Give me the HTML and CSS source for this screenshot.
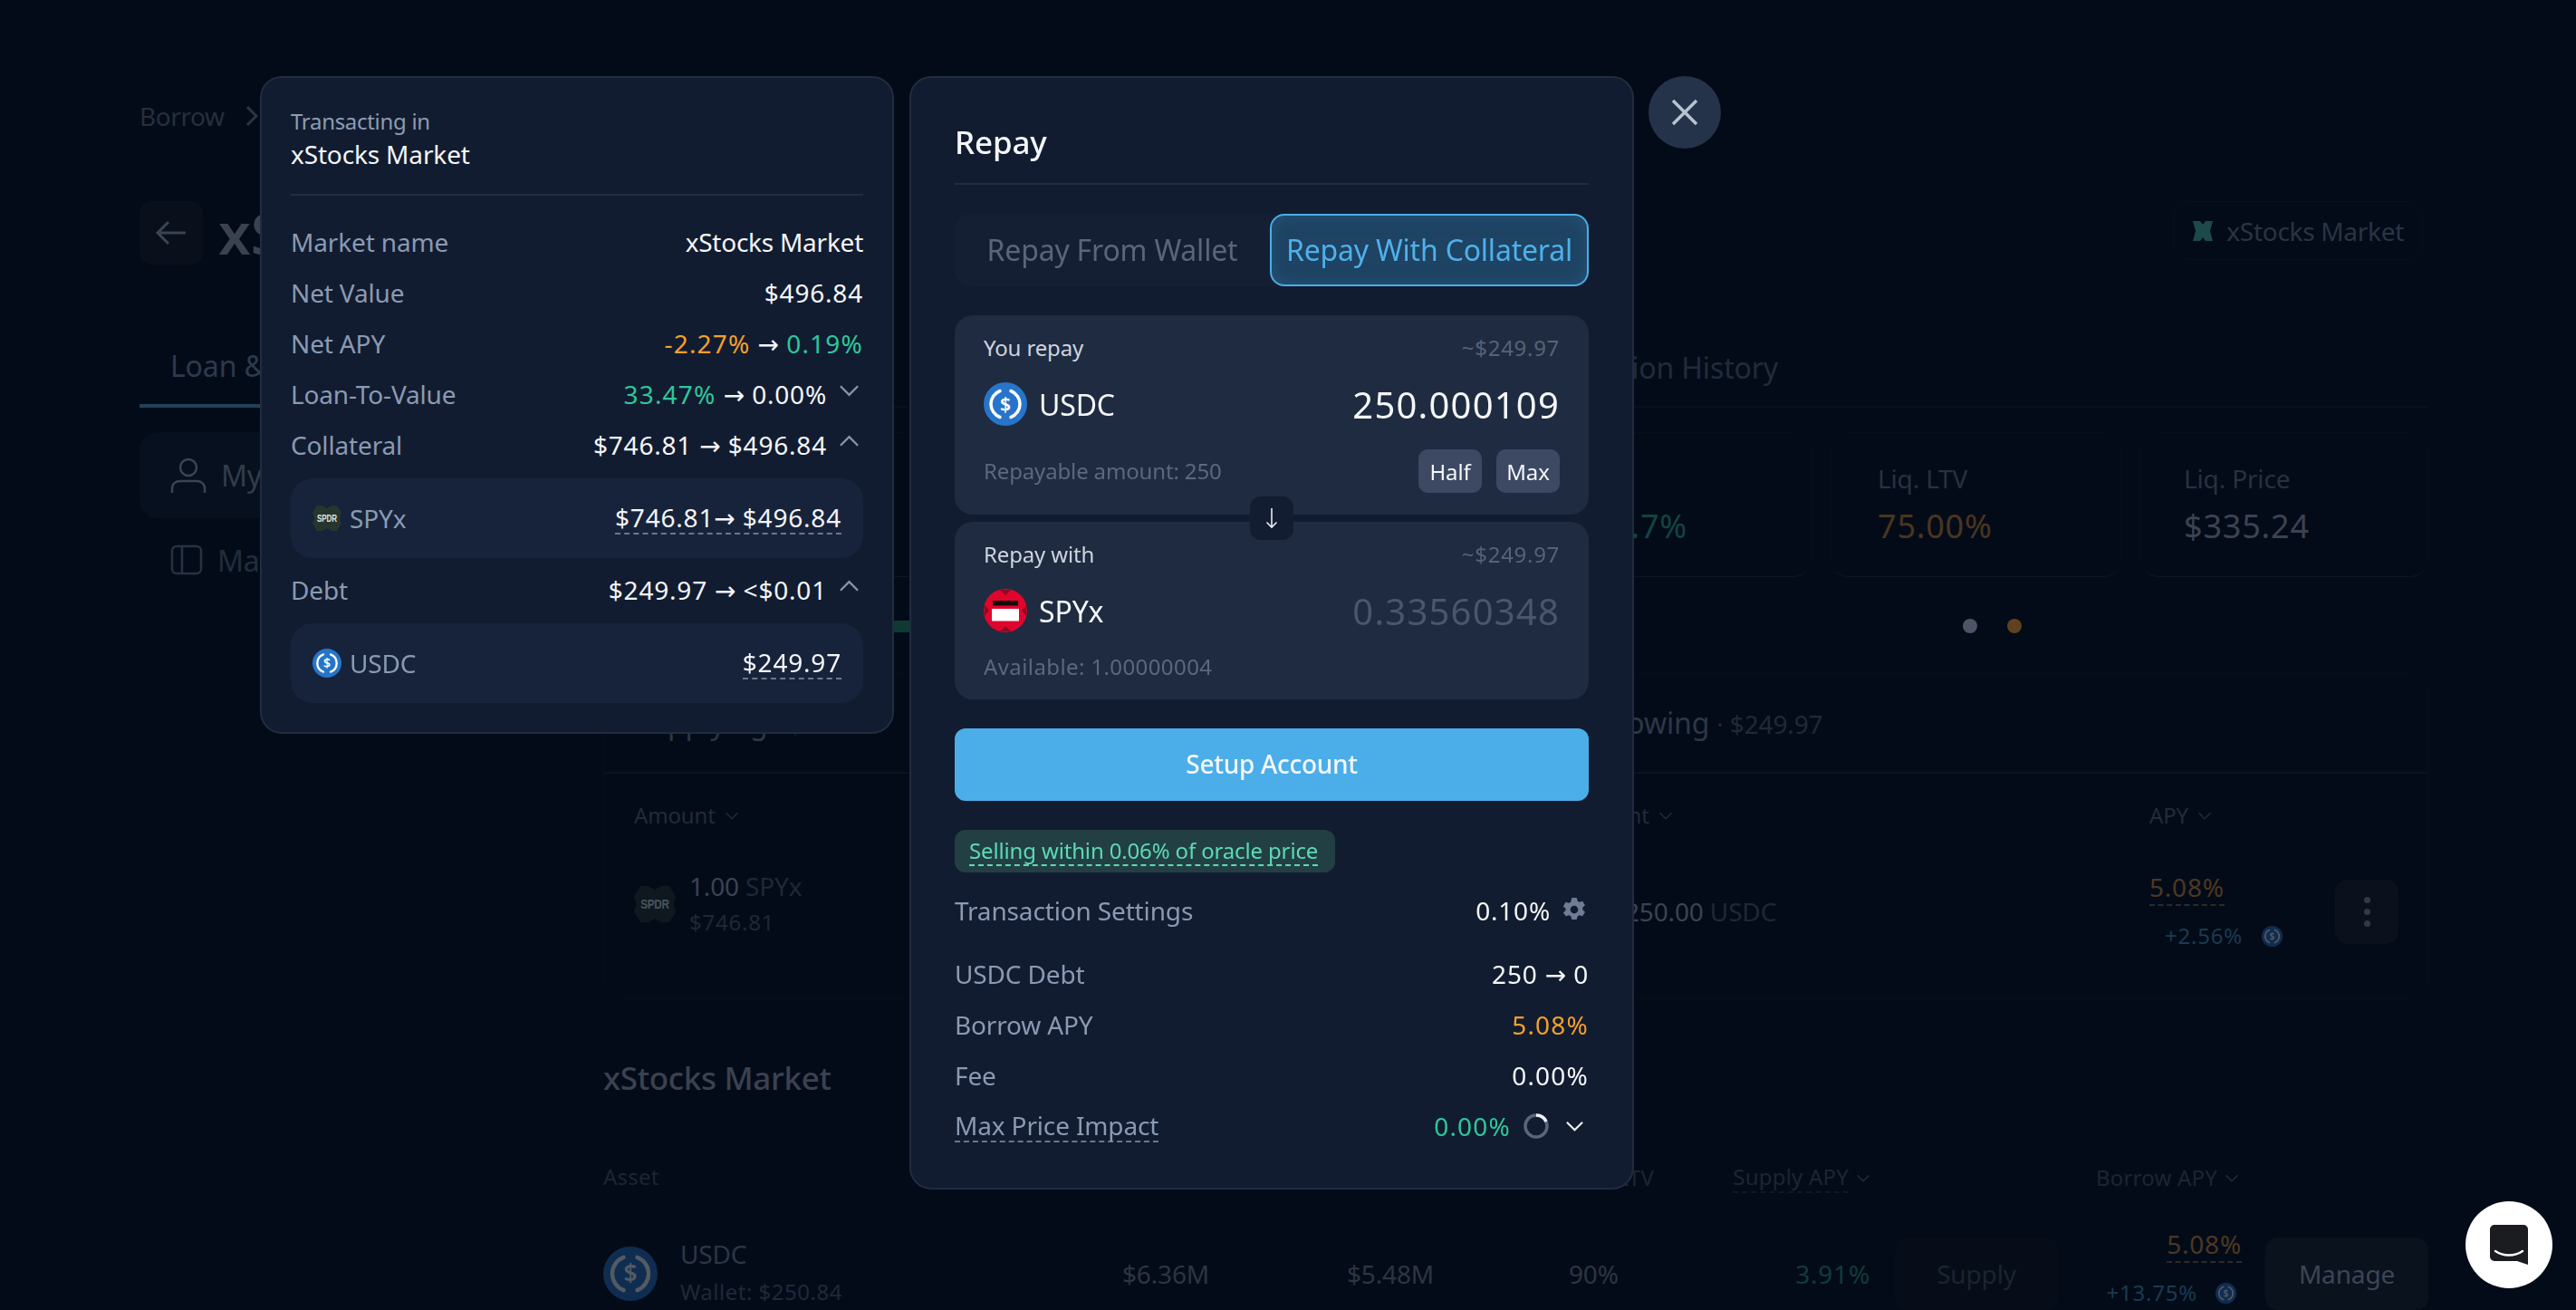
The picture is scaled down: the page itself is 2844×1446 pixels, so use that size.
FILE: index.html
```html
<!DOCTYPE html>
<html lang="en">
<head>
  <meta charset="UTF-8">
  <title>Repay</title>
  <link rel="stylesheet" href="styles.css">
</head>
<body>

  <svg class="defs" width="0" height="0">
    <symbol id="usdc" viewBox="0 0 48 48">
      <circle cx="24" cy="24" r="24" fill="#2775ca"/>
      <path d="M18 9.5A15.5 15.5 0 0 0 18 38.500M30 9.500A15.500 15.500 0 0 1 30 38.500" fill="none" stroke="#fff" stroke-width="3.500" stroke-linecap="round"/>
      <text x="24" y="31.500" text-anchor="middle" font-family="Noto Sans" font-size="21" font-weight="600" fill="#fff">$</text>
    </symbol>
    <symbol id="spyx" viewBox="0 0 48 48">
      <circle cx="24" cy="24" r="24" fill="#e0052d"/>
      <path d="M18 1l6 6 6-6zM18 47l6-6 6 6zM1 18l5 6-5 6zM47 18l-5 6 5 6z" fill="#8e0a20"/>
      <rect x="10" y="13" width="28" height="5.500" fill="#17080d"/>
      <rect x="9" y="22" width="30" height="13.500" fill="#fff"/>
    </symbol>
    <symbol id="spdr" viewBox="0 0 32 32">
      <path d="M5 2h6l5 3 5-3h6l5 8-2 6 2 6-5 8h-6l-5-3-5 3h-6l-5-8 2-6-2-6z" fill="#26352e"/>
      <text x="16" y="19.500" text-anchor="middle" font-family="Liberation Sans Narrow, Liberation Sans" font-size="10" font-weight="700" textLength="22" lengthAdjust="spacingAndGlyphs" fill="#dfe5e2">SPDR</text>
    </symbol>
    <symbol id="chev-down" viewBox="0 0 24 14">
      <path d="M2 2l10 10L22 2" fill="none" stroke="currentColor" stroke-width="2.400"/>
    </symbol>
    <symbol id="chev-up" viewBox="0 0 24 14">
      <path d="M2 12L12 2l10 10" fill="none" stroke="currentColor" stroke-width="2.400"/>
    </symbol>
  </svg>

  <!-- page behind the modal -->
  <div class="page">
    <div class="crumbs">Borrow
      <svg class="crumb-sep" width="14" height="22" viewBox="0 0 14 22"><path d="M2 1l10 10L2 21" fill="none" stroke="#2b3444" stroke-width="3"/></svg>
      xStocks Market
    </div>

    <div class="head">
      <div class="head-left">
        <div class="back">
          <svg width="36" height="30" viewBox="0 0 36 30"><path d="M34 15H3M15 3L3 15l12 12" fill="none" stroke="#3a4452" stroke-width="3"/></svg>
        </div>
        <div class="page-title">xStocks Market</div>
      </div>
      <div class="chip">
        <svg width="24" height="24" viewBox="0 0 24 24"><path d="M1 1h8l3 4 3-4h8l-3 11 3 11h-8l-3-4-3 4H1l3-11z" fill="#1c4a4b"/></svg>
        xStocks Market
      </div>
    </div>

    <div class="tabs">
      <div class="tab tab-active">Loan &amp; Borrow</div>
      <div class="tab">Transaction History</div>
    </div>

    <div class="content">
      <div class="side">
        <div class="side-item side-active">
          <svg width="40" height="40" viewBox="0 0 40 40"><circle cx="20" cy="11" r="9" fill="none" stroke="#3a4452" stroke-width="2.500"/><path d="M2 39v-5c0-5 4-8 9-8h18c5 0 9 3 9 8v5" fill="none" stroke="#3a4452" stroke-width="2.500"/></svg>
          My Positions
        </div>
        <div class="side-item">
          <svg width="36" height="34" viewBox="0 0 36 34"><rect x="2" y="2" width="32" height="30" rx="5" fill="none" stroke="#263243" stroke-width="2.500"/><path d="M13 2v30" stroke="#263243" stroke-width="2.500"/></svg>
          Markets
        </div>
      </div>

      <div class="main">
        <div class="stats">
          <div class="stat stat-wide"><div class="stat-label">Net APY</div><div class="stat-value dim-green stat-end">4.7%</div></div>
          <div class="stat stat-ltv"><div class="stat-label">Liq. LTV</div><div class="stat-value dim-orange">75.00%</div></div>
          <div class="stat stat-price"><div class="stat-label">Liq. Price</div><div class="stat-value dim-text">$335.24</div></div>
        </div>

        <div class="slider">
          <div class="slider-bar"></div>
          <div class="dots"><span class="dot"></span><span class="dot dot-orange"></span></div>
        </div>

        <div class="positions">
          <div class="pos-card">
            <div class="pos-head">Supplying <span class="pos-sum">· $746.81</span></div>
            <div class="pos-th">Amount <svg class="th-chev"><use href="#chev-down"/></svg></div>
            <div class="pos-row">
              <svg class="pos-icon dim-icon"><use href="#spdr"/></svg>
              <div>
                <div class="pos-amount">1.00 <span class="pos-unit">SPYx</span></div>
                <div class="pos-usd">$746.81</div>
              </div>
            </div>
          </div>

          <div class="pos-card">
            <div class="pos-head">Borrowing <span class="pos-sum">· $249.97</span></div>
            <div class="borrow-grid">
              <div class="pos-th">Amount <svg class="th-chev"><use href="#chev-down"/></svg></div>
              <div class="pos-th">APY <svg class="th-chev"><use href="#chev-down"/></svg></div>
            </div>
            <div class="borrow-grid borrow-row">
              <div class="borrow-amount">
                <svg class="pos-icon dim-icon"><use href="#usdc"/></svg>
                <div class="pos-amount">250.00 <span class="pos-unit">USDC</span></div>
              </div>
              <div class="apy-cell">
                <div class="apy-value"><span class="dim-dash">5.08%</span></div>
                <div class="apy-reward">+2.56% <svg class="reward-icon dim-icon"><use href="#usdc"/></svg></div>
              </div>
              <div class="more"><i></i><i></i><i></i></div>
            </div>
          </div>
        </div>

        <div class="market-title">xStocks Market</div>

        <div class="market-grid market-head">
          <div>Asset</div>
          <div></div>
          <div></div>
          <div class="th-ltv">Max LTV <svg class="th-chev"><use href="#chev-down"/></svg></div>
          <div class="th-right"><span class="th-dash">Supply APY</span> <svg class="th-chev"><use href="#chev-down"/></svg></div>
          <div></div>
          <div class="th-right th-borrow">Borrow APY <svg class="th-chev"><use href="#chev-down"/></svg></div>
          <div></div>
        </div>

        <div class="market-grid market-row">
          <div class="asset">
            <svg class="asset-icon dim-icon"><use href="#usdc"/></svg>
            <div>
              <div class="asset-name">USDC</div>
              <div class="asset-wallet">Wallet: $250.84</div>
            </div>
          </div>
          <div class="cell-num">$6.36M</div>
          <div class="cell-num">$5.48M</div>
          <div class="cell-num">90%</div>
          <div class="cell-supply">3.91%</div>
          <div class="cell-btn"><div class="ghost-btn">Supply</div></div>
          <div class="cell-borrow">
            <div><span class="dim-dash">5.08%</span></div>
            <div class="apy-reward-2">+13.75% <svg class="reward-icon dim-icon"><use href="#usdc"/></svg></div>
          </div>
          <div class="cell-btn"><div class="ghost-btn manage-btn">Manage</div></div>
        </div>
      </div>
    </div>
  </div>

  <!-- modal -->
  <div class="overlay">
    <div class="panel info-panel">
      <div class="info-head">
        <div class="info-small">Transacting in</div>
        <div class="info-market">xStocks Market</div>
      </div>

      <div class="row"><span class="label">Market name</span><span class="val val-text">xStocks Market</span></div>
      <div class="row"><span class="label">Net Value</span><span class="val">$496.84</span></div>
      <div class="row"><span class="label">Net APY</span><span class="val"><span class="orange">-2.27%</span> <span class="arrow">→</span> <span class="green">0.19%</span></span></div>
      <div class="row">
        <span class="label">Loan-To-Value</span>
        <span class="val-chev"><span class="val"><span class="green">33.47%</span> <span class="arrow">→</span> 0.00%</span><svg class="chev"><use href="#chev-down"/></svg></span>
      </div>
      <div class="row">
        <span class="label">Collateral</span>
        <span class="val-chev"><span class="val">$746.81 <span class="arrow">→</span> $496.84</span><svg class="chev"><use href="#chev-up"/></svg></span>
      </div>
      <div class="sub-card">
        <span class="sub-token"><svg class="sub-icon"><use href="#spdr"/></svg>SPYx</span>
        <span class="val dashed">$746.81<span class="arrow">→</span> $496.84</span>
      </div>
      <div class="row">
        <span class="label">Debt</span>
        <span class="val-chev"><span class="val">$249.97 <span class="arrow">→</span> &lt;$0.01</span><svg class="chev"><use href="#chev-up"/></svg></span>
      </div>
      <div class="sub-card">
        <span class="sub-token"><svg class="sub-icon"><use href="#usdc"/></svg>USDC</span>
        <span class="val dashed">$249.97</span>
      </div>
    </div>

    <div class="panel repay-panel">
      <div class="repay-title">Repay</div>

      <div class="switch">
        <div class="switch-item">Repay From Wallet</div>
        <div class="switch-item switch-active">Repay With Collateral</div>
      </div>

      <div class="swap-cards">
        <div class="swap-card card-top">
          <div class="swap-line"><span class="swap-label">You repay</span><span class="swap-usd">~$249.97</span></div>
          <div class="token-line">
            <span class="token"><svg class="token-icon"><use href="#usdc"/></svg>USDC</span>
            <span class="amount">250.000109</span>
          </div>
          <div class="swap-foot">
            <span class="swap-note">Repayable amount: 250</span>
            <span class="mini-btns"><span class="mini-btn">Half</span><span class="mini-btn">Max</span></span>
          </div>
        </div>
        <div class="swap-card card-bottom">
          <div class="swap-line"><span class="swap-label">Repay with</span><span class="swap-usd">~$249.97</span></div>
          <div class="token-line">
            <span class="token"><svg class="token-icon"><use href="#spyx"/></svg>SPYx</span>
            <span class="amount amount-dim">0.33560348</span>
          </div>
          <div class="swap-note note-last">Available: 1.00000004</div>
        </div>
        <div class="swap-arrow">
          <svg width="14" height="24" viewBox="0 0 14 24"><path d="M7 1v21M1.500 16.500L7 22l5.500-5.500" fill="none" stroke="#e8edf3" stroke-width="1.600"/></svg>
        </div>
      </div>

      <div class="setup-btn">Setup Account</div>

      <div class="oracle"><span class="oracle-text">Selling within 0.06% of oracle price</span></div>

      <div class="row"><span class="label">Transaction Settings</span>
        <span class="val-icon"><span class="val">0.10%</span>
          <svg class="gear" viewBox="0 0 24 24"><path fill-rule="evenodd" d="M9.500 0h5l.8 3.300 2 1.100 3.200-1 2.500 4.300-2.400 2.300v2.200l2.400 2.300-2.500 4.300-3.200-1-2 1.100-.8 3.300h-5l-.8-3.300-2-1.100-3.200 1L.8 15.300l2.400-2.300v-2.200L.8 8.700l2.500-4.300 3.200 1 2-1.100zM12 8a4 4 0 1 0 0 8 4 4 0 0 0 0-8z" fill="#6f7c93"/></svg>
        </span>
      </div>
      <div class="row row-first"><span class="label">USDC Debt</span><span class="val">250 <span class="arrow">→</span> 0</span></div>
      <div class="row"><span class="label">Borrow APY</span><span class="val orange">5.08%</span></div>
      <div class="row"><span class="label">Fee</span><span class="val pct">0.00%</span></div>
      <div class="row">
        <span class="label dashed">Max Price Impact</span>
        <span class="val-icon impact">
          <span class="val green">0.00%</span>
          <svg class="spinner" viewBox="0 0 28 28"><circle cx="14" cy="14" r="12" fill="none" stroke="#5b6679" stroke-width="3.500"/><path d="M14 2a12 12 0 0 1 11 7" fill="none" stroke="#f0f3f7" stroke-width="3.500"/></svg>
          <svg class="chev-white"><use href="#chev-down"/></svg>
        </span>
      </div>
    </div>

    <div class="close-btn">
      <svg width="30" height="30" viewBox="0 0 30 30"><path d="M2 2l26 26M28 2L2 28" stroke="#b7c3d2" stroke-width="3.500"/></svg>
    </div>
  </div>

  <div class="chat">
    <svg width="44" height="46" viewBox="0 0 44 46"><path d="M6 1h32a5 5 0 0 1 5 5v39l-12-4H6a5 5 0 0 1-5-5V6a5 5 0 0 1 5-5z" fill="#1a1c20"/><path d="M7 30c9 6 21 6 30 0" fill="none" stroke="#fff" stroke-width="2.500" stroke-linecap="round"/></svg>
  </div>

</body>
</html>
```

FILE: styles.css
```css
* {
  box-sizing: border-box;
}

html, body {
  margin: 0;
  height: 100%;
}

body {
  font-family: "Noto Sans", sans-serif;
  font-size: 28px;
  letter-spacing: -.15px;
  background-color: #040b18;
  color: #f4f6f9;
  overflow: hidden;
}

.defs {
  display: none;
}

/* Page behind the modal, colours already dimmed */
.page {
  width: 2844px;
  height: 1446px;
  padding: 108px 163px 0 154px;
  overflow: hidden;
}

.crumbs {
  height: 40px;
  line-height: 40px;
  letter-spacing: -.4px;
  color: #262f3d;
}

.crumb-sep {
  margin: 0 8px 0 16px;
}

.head {
  display: flex;
  justify-content: space-between;
  margin-top: 74px;
  padding-right: 6px;
}

.head-left {
  display: flex;
  align-items: center;
  gap: 17px;
}

.back {
  width: 70px;
  height: 70px;
  display: flex;
  align-items: center;
  justify-content: center;
  background-color: #090f1b;
  border-radius: 14px;
}

.page-title {
  font-size: 64px;
  font-weight: 600;
  line-height: 70px;
  color: #3a4250;
}

.chip {
  display: flex;
  align-items: center;
  gap: 14px;
  height: 65px;
  padding: 0 20px;
  letter-spacing: -.3px;
  color: #2a3443;
  border: 1px solid #080e1b;
  border-radius: 16px;
}

.tabs {
  display: flex;
  justify-content: space-between;
  align-items: flex-end;
  height: 158px;
  padding-right: 718px;
  border-bottom: 2px solid #0a111e;
}

.tab {
  font-size: 32px;
  line-height: 64px;
  padding-bottom: 10px;
  color: #202b3b;
}

.tab-active {
  width: 512px;
  padding-left: 34px;
  color: #2d3a4d;
  border-bottom: 4px solid #24405a;
  margin-bottom: -2px;
}

.content {
  display: grid;
  grid-template-columns: 512px 2015px;
  padding-top: 27px;
}

.side-item {
  display: flex;
  align-items: center;
  gap: 16px;
  width: 480px;
  height: 92px;
  padding-left: 34px;
  font-size: 32px;
  color: #222d3c;
}

.side-active {
  height: 95px;
  color: #333c4a;
  background-color: #06101e;
  border-radius: 20px;
}

.stats {
  display: flex;
  justify-content: flex-end;
  gap: 21px;
}

.stat {
  height: 160px;
  padding-top: 30px;
  border: 1px solid #070e1a;
  border-bottom-color: #0d1522;
  border-radius: 20px;
}

.stat-wide {
  flex: 1;
  padding-right: 136px;
}

.stat-ltv {
  width: 321px;
  padding-left: 51px;
}

.stat-price {
  width: 318px;
  padding-left: 47px;
}

.stat-label {
  line-height: 40px;
  color: #273141;
}

.stat-value {
  font-size: 36px;
  letter-spacing: .8px;
  line-height: 50px;
  margin-top: 8px;
}

.stat-end {
  text-align: right;
}

.dim-green {
  color: #124540;
}

.dim-orange {
  color: #4a3520;
}

.dim-text {
  color: #3b4352;
}

.slider {
  display: flex;
  align-items: center;
  justify-content: space-between;
  height: 16px;
  margin-top: 46px;
  padding-right: 449px;
}

.slider-bar {
  width: 500px;
  height: 13px;
  background-color: #0f3a33;
}

.dots {
  display: flex;
  gap: 33px;
}

.dot {
  width: 16px;
  height: 16px;
  border-radius: 50%;
  background-color: #4c5566;
}

.dot-orange {
  background-color: #60401f;
}

.positions {
  display: grid;
  grid-template-columns: 1010px 984px;
  gap: 21px;
  margin-top: 44px;
}

.pos-card {
  height: 360px;
  border: 1px solid #070e1a;
  border-radius: 20px;
}

.pos-head {
  height: 110px;
  padding: 32px 33px 0;
  font-size: 32px;
  line-height: 44px;
  color: #2d3747;
  border-bottom: 2px solid #0a1320;
}

.pos-sum {
  font-size: 28px;
  color: #1f2937;
}

.pos-th {
  display: flex;
  align-items: center;
  gap: 10px;
  padding-left: 33px;
  margin-top: 30px;
  font-size: 24px;
  line-height: 32px;
  color: #212b39;
}

.th-chev {
  width: 16px;
  height: 9px;
  color: #212b39;
}

.pos-row {
  display: flex;
  align-items: center;
  gap: 15px;
  padding: 42px 33px 0;
}

.pos-icon {
  width: 46px;
  height: 46px;
  flex-shrink: 0;
}

.dim-icon {
  opacity: .32;
}

.pos-amount {
  line-height: 40px;
  color: #3b4352;
}

.pos-unit {
  color: #1e2836;
}

.pos-usd {
  font-size: 24px;
  letter-spacing: .8px;
  line-height: 40px;
  color: #1e2836;
}

.borrow-grid {
  display: grid;
  grid-template-columns: 642px 205px 70px;
  padding-left: 33px;
}

.borrow-grid .pos-th {
  padding-left: 0;
}

.borrow-row {
  align-items: center;
  margin-top: 47px;
}

.borrow-amount {
  display: flex;
  align-items: center;
  gap: 17px;
}

.apy-value {
  letter-spacing: .8px;
  line-height: 32px;
  color: #4d3821;
}

.dim-dash {
  color: #4d3821;
  letter-spacing: .8px;
  border-bottom: 2px dashed #2b2a2a;
}

.apy-reward {
  display: flex;
  align-items: center;
  gap: 21px;
  margin: 22px 0 0 17px;
  font-size: 24px;
  letter-spacing: .8px;
  line-height: 32px;
  color: #1b3a52;
}

.reward-icon {
  width: 23px;
  height: 23px;
}

.more {
  width: 70px;
  height: 71px;
  display: flex;
  flex-direction: column;
  align-items: center;
  justify-content: center;
  gap: 6px;
  background-color: #0a111d;
  border-radius: 14px;
}

.more i {
  width: 7px;
  height: 7px;
  border-radius: 50%;
  background-color: #323a48;
}

.market-title {
  margin-top: 64px;
  font-size: 35px;
  font-weight: 500;
  letter-spacing: -.3px;
  line-height: 46px;
  color: #3a4250;
}

.market-grid {
  display: grid;
  grid-template-columns: 573px 248px 245px 104px 229px 207px 203px 206px;
}

.market-head {
  margin-top: 70px;
  font-size: 24px;
  letter-spacing: .2px;
  line-height: 32px;
  color: #1c2533;
}

.th-ltv {
  display: flex;
  align-items: center;
  justify-content: flex-end;
  gap: 10px;
  white-space: nowrap;
}

.th-right {
  display: flex;
  align-items: center;
  justify-content: flex-end;
  gap: 8px;
}

.th-borrow {
  padding-right: 3px;
}

.th-dash {
  border-bottom: 2px dashed #111824;
}

.market-row {
  align-items: center;
  height: 80px;
  margin-top: 47px;
}

.asset {
  display: flex;
  align-items: center;
  gap: 25px;
}

.asset-icon {
  width: 60px;
  height: 60px;
}

.asset-name {
  line-height: 40px;
  color: #2c3645;
}

.asset-wallet {
  font-size: 24px;
  letter-spacing: .5px;
  line-height: 44px;
  color: #1f2938;
}

.cell-num {
  color: #2c3542;
}

.cell-supply {
  text-align: right;
  letter-spacing: .8px;
  color: #103c39;
}

.cell-btn {
  display: flex;
  justify-content: flex-end;
}

.ghost-btn {
  width: 180px;
  height: 80px;
  display: flex;
  align-items: center;
  justify-content: center;
  color: #1a2432;
  background-color: #060d18;
  border-radius: 14px;
}

.manage-btn {
  color: #3d4554;
  background-color: #0a121e;
}

.cell-borrow {
  align-self: start;
  margin-top: -7px;
  text-align: right;
  line-height: 32px;
}

.apy-reward-2 {
  display: flex;
  align-items: center;
  justify-content: flex-end;
  gap: 20px;
  margin-top: 22px;
  padding-right: 6px;
  font-size: 24px;
  letter-spacing: .8px;
  color: #1b3a52;
}

/* Modal */
.overlay {
  position: fixed;
  top: 0;
  left: 0;
  width: 100%;
  height: 100%;
  display: flex;
  align-items: flex-start;
  gap: 17px;
  padding: 84px 0 0 287px;
}

.panel {
  background-color: #121c30;
  border: 2px solid #212c40;
  border-radius: 24px;
}

.info-panel {
  width: 700px;
  height: 726px;
  padding: 32px;
}

.repay-panel {
  width: 800px;
  height: 1229px;
  margin-right: -1px;
  padding: 48px;
}

.info-head {
  padding-bottom: 26px;
  margin-bottom: 24px;
  border-bottom: 2px solid #222d41;
}

.info-small {
  font-size: 24px;
  letter-spacing: -.3px;
  line-height: 32px;
  color: #8e9cb2;
}

.info-market {
  margin-top: 2px;
  line-height: 36px;
}

.row {
  display: flex;
  align-items: center;
  justify-content: space-between;
  height: 56px;
  padding-bottom: 2px;
}

.label {
  color: #8a9ab2;
}

.val {
  letter-spacing: .8px;
  white-space: nowrap;
}

.val-text {
  letter-spacing: -.25px;
}

.arrow {
  font-family: "DejaVu Sans", sans-serif;
  font-size: 28px;
  line-height: 1;
  letter-spacing: 0;
}

.orange, .green, .pct {
  letter-spacing: 1.2px;
}

.orange {
  color: #f2a02c;
}

.green {
  color: #2fc79b;
}

.val-chev {
  display: flex;
  align-items: center;
  gap: 13px;
  padding-right: 4px;
}

.chev {
  width: 23px;
  height: 14px;
  margin-bottom: 8px;
  color: #8595ad;
}

.sub-card {
  display: flex;
  align-items: center;
  justify-content: space-between;
  height: 88px;
  margin: 8px 0;
  padding: 0 24px;
  background-color: #17233a;
  border-radius: 24px;
}

.sub-token {
  display: flex;
  align-items: center;
  gap: 9px;
  color: #8a9ab2;
}

.sub-icon {
  width: 32px;
  height: 32px;
}

.dashed {
  border-bottom: 2px dashed #6d7788;
  line-height: 32px;
  padding-bottom: 1px;
}

.repay-title {
  height: 70px;
  font-size: 35px;
  font-weight: 500;
  line-height: 46px;
  border-bottom: 2px solid #222d41;
}

.switch {
  display: grid;
  grid-template-columns: 348px 352px;
  height: 80px;
  margin-top: 32px;
  background-color: #151f33;
  border-radius: 16px;
}

.switch-item {
  display: flex;
  align-items: center;
  justify-content: center;
  font-size: 32px;
  letter-spacing: -.2px;
  padding-bottom: 2px;
  color: #5a6579;
}

.switch-active {
  color: #4fb0ea;
  background-color: #1e4363;
  border: 2px solid #4baee8;
  border-radius: 16px;
  box-shadow: inset 0 0 18px #255377;
}

.swap-cards {
  position: relative;
  display: flex;
  flex-direction: column;
  gap: 8px;
  margin-top: 32px;
}

.swap-card {
  padding: 20px 32px 0;
  background-color: #1f2b40;
  border-radius: 20px;
}

.card-top {
  height: 220px;
}

.card-bottom {
  height: 196px;
}

.swap-line {
  display: flex;
  justify-content: space-between;
  font-size: 24px;
  line-height: 32px;
}

.swap-label {
  color: #cdd5df;
}

.swap-usd {
  letter-spacing: .7px;
  color: #566276;
}

.token-line {
  display: flex;
  align-items: center;
  justify-content: space-between;
  height: 48px;
  margin-top: 22px;
}

.token {
  display: flex;
  align-items: center;
  gap: 13px;
  font-size: 32px;
}

.token-icon {
  width: 48px;
  height: 48px;
}

.amount {
  font-size: 40px;
  letter-spacing: 1.2px;
}

.amount-dim {
  color: #4a566c;
}

.swap-foot {
  display: flex;
  align-items: center;
  justify-content: space-between;
  height: 48px;
  margin-top: 26px;
}

.swap-note {
  font-size: 24px;
  line-height: 32px;
  color: #5c687c;
}

.note-last {
  margin-top: 22px;
  letter-spacing: .4px;
}

.mini-btns {
  display: flex;
  gap: 16px;
}

.mini-btn {
  width: 70px;
  height: 48px;
  display: flex;
  align-items: center;
  justify-content: center;
  font-size: 24px;
  background-color: #3d4963;
  border-radius: 10px;
}

.swap-arrow {
  position: absolute;
  top: 200px;
  left: 50%;
  width: 48px;
  height: 48px;
  margin-left: -24px;
  display: flex;
  align-items: center;
  justify-content: center;
  background-color: #131d31;
  border-radius: 12px;
}

.setup-btn {
  height: 80px;
  margin-top: 32px;
  padding-bottom: 2px;
  display: flex;
  align-items: center;
  justify-content: center;
  font-weight: 500;
  letter-spacing: -.3px;
  background-color: #4baee8;
  border-radius: 12px;
}

.oracle {
  width: 420px;
  height: 47px;
  margin: 32px 0 15px;
  padding: 6px 16px 0;
  background-color: #224043;
  border-radius: 12px;
  font-size: 24px;
  color: #5ed9b6;
  white-space: nowrap;
}

.oracle-text {
  display: inline-block;
  line-height: 31px;
  border-bottom: 2px dashed #5ed9b6;
}

.row-first {
  margin-top: 14px;
}

.val-icon {
  display: flex;
  align-items: center;
  gap: 13px;
  padding-right: 3px;
}

.impact {
  gap: 14px;
  padding-right: 5px;
}

.gear {
  width: 26px;
  height: 26px;
  margin-bottom: 2px;
}

.spinner {
  width: 28px;
  height: 28px;
}

.chev-white {
  width: 21px;
  height: 12px;
  margin-left: 4px;
  color: #eef1f5;
}

.close-btn {
  width: 80px;
  height: 80px;
  display: flex;
  align-items: center;
  justify-content: center;
  background-color: #25334a;
  border-radius: 50%;
}

.chat {
  position: fixed;
  right: 26px;
  bottom: 24px;
  width: 96px;
  height: 96px;
  display: flex;
  align-items: center;
  justify-content: center;
  background-color: #fff;
  border-radius: 50%;
}
```
